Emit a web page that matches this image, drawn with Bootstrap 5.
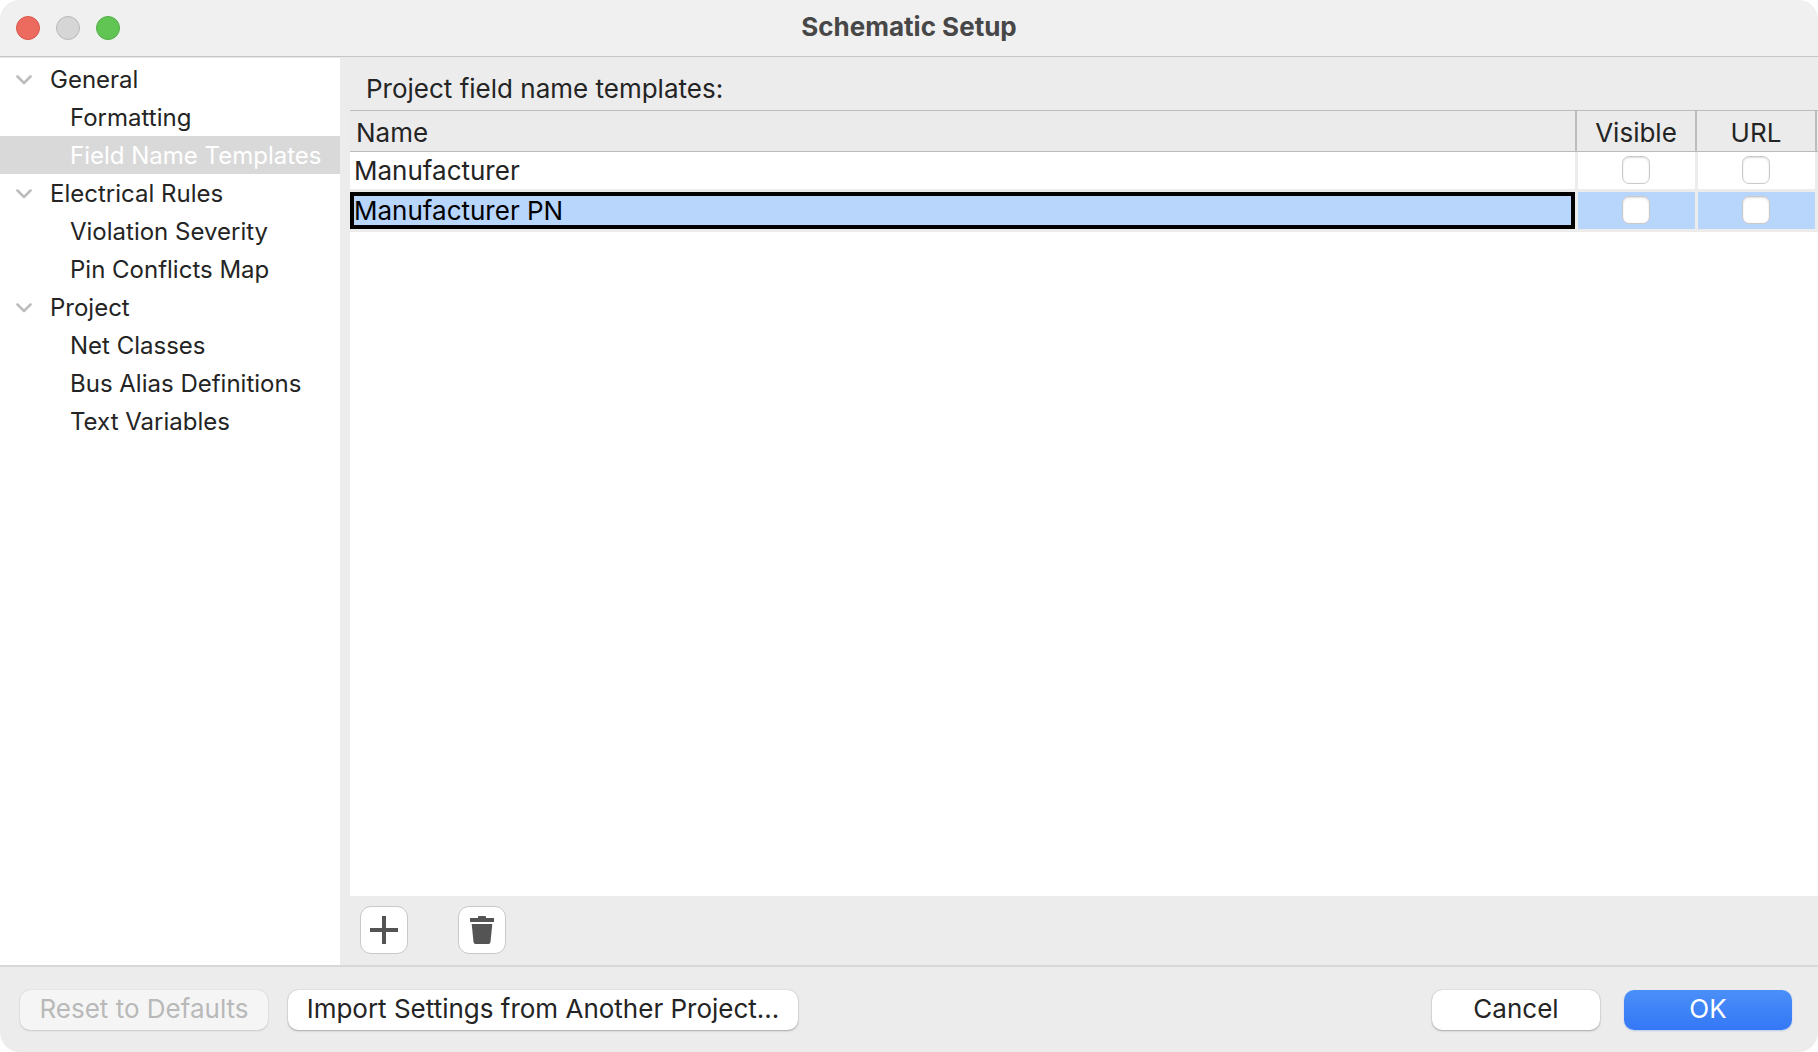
<!DOCTYPE html>
<html lang="en">
<head>
<meta charset="utf-8">
<meta name="viewport" content="width=device-width, initial-scale=1">
<title>Schematic Setup</title>
<link href="https://cdn.jsdelivr.net/npm/bootstrap@5.3.0/dist/css/bootstrap.min.css" rel="stylesheet">
<style>
  body { font-family: Inter, "Liberation Sans", sans-serif; font-size: 26px; line-height: 30px; color: #242424; background: #fff; }
  .window { background: #ececec; border-radius: 20px; }
  .titlebar { height: 57px; background: #f0f0f0; border-bottom: 1px solid #c6c6c6; padding: 0 16px; }
  .titlebar h1 { font-size: 26px; line-height: 30px; font-weight: 700; color: #474747; padding-bottom: 2px; }
  .side-slot { flex: 1 1 0; }
  .light { width: 24px; height: 24px; border-radius: 50%; border: 1px solid; padding: 0; }
  .light-close { background: #ed6a5e; border-color: #d8574c; }
  .light-min { background: #d6d6d6; border-color: #b9b9b9; }
  .light-zoom { background: #61c554; border-color: #50b043; }
  .sidebar { width: 340px; background: #fff; border-top: 1px solid #e4e4e4; padding-top: 2px; font-size: 24px; }
  .tree-item { display: flex; align-items: center; height: 38px; padding-top: 2px; color: #242424; text-decoration: none; white-space: nowrap; }
  .tree-group { padding-left: 16px; gap: 18px; }
  .tree-leaf { padding-left: 70px; }
  .tree-leaf.active { background: #d9d9d9; color: #fff; }
  .pane { padding-left: 10px; min-width: 0; }
  .pane-title { padding: 17px 16px 6px; font-size: 26px; line-height: 30px; margin: 0; }
  .grid { width: 100%; table-layout: fixed; border-collapse: separate; border-spacing: 0; }
  .grid .check-col { width: 120px; }
  .grid th { height: 42px; font-weight: 400; padding: 4px 6px 0; background: #ebebeb; border: solid #bcbcbc; border-width: 1px 0; line-height: 30px; text-align: center; box-shadow: inset -1px 0 #ebebeb, inset -3px 0 #bcbcbc; }
  .grid th:first-child { text-align: left; }
  .grid th + th { padding: 4px 4px 0 0; }
  .grid td { height: 40px; padding: 0 4px; background: #fff; border: solid #ececec; border-width: 0 3px 3px 0; line-height: 30px; text-align: center; }
  .grid td + td { padding: 0 2px 2px 0; }
  .grid td:first-child { text-align: left; }
  .grid tr.picked td { background: #b8d5fc; color: #000; }
  .grid tr.picked td:first-child { box-shadow: inset 0 0 0 4px #000; }
  .tick { appearance: none; display: block; width: 28px; height: 28px; margin: 0 auto; background: #fff; border: 1px solid #c9c9c9; border-radius: 7px; box-shadow: inset 0 1px 2px #ddd; }
  .toolbar { padding: 10px 10px 11px; gap: 50px; }
  .tool { width: 48px; height: 48px; padding: 0; background: #fff; border: 1px solid #c8c8c8; border-radius: 11px; display: flex; align-items: center; justify-content: center; }
  .footer-bar { border-top: 2px solid #d8d8d8; padding: 23px 26px 22px 20px; }
  .push { height: 40px; padding: 0 16px 2px; font-size: 26px; line-height: 38px; border: 0; border-radius: 10px; background: #fff; color: #242424; box-shadow: 0 0 1px #999, 0 1px 2px #aaa; white-space: nowrap; }
  .push:disabled { background: #f5f5f5; color: #b9b9b9; opacity: 1; box-shadow: 0 0 1px #bbb, 0 1px 2px #ccc; }
  .push-reset { width: 248px; margin-right: 20px; }
  .push-import { width: 510px; }
  .push-answer { width: 168px; }
  .push-ok { background: linear-gradient(#4a8ff8, #3478f6); color: #fff; box-shadow: 0 1px 2px #b9c9e8; }
</style>
<script src="https://cdn.jsdelivr.net/npm/bootstrap@5.3.0/dist/js/bootstrap.bundle.min.js"></script>
</head>
<body>
<div class="window d-flex flex-column vh-100 overflow-hidden">
  <header class="titlebar d-flex align-items-center flex-shrink-0">
    <div class="side-slot d-flex gap-3">
      <button type="button" class="light light-close" aria-label="Close"></button>
      <button type="button" class="light light-min" aria-label="Minimize" disabled></button>
      <button type="button" class="light light-zoom" aria-label="Zoom"></button>
    </div>
    <h1 class="m-0">Schematic Setup</h1>
    <div class="side-slot"></div>
  </header>

  <div class="d-flex flex-grow-1 overflow-hidden">
    <nav class="sidebar flex-shrink-0" aria-label="Settings pages">
      <a href="#" class="tree-item tree-group"><svg width="16" height="10" viewBox="0 0 16 10" fill="none" stroke="#bdbdbd" stroke-width="2.6" stroke-linecap="round" stroke-linejoin="round" aria-hidden="true"><path d="M1.5 1.5 8 8l6.500-6.500"/></svg>General</a>
      <a href="#" class="tree-item tree-leaf">Formatting</a>
      <a href="#" class="tree-item tree-leaf active" aria-current="page">Field Name Templates</a>
      <a href="#" class="tree-item tree-group"><svg width="16" height="10" viewBox="0 0 16 10" fill="none" stroke="#bdbdbd" stroke-width="2.6" stroke-linecap="round" stroke-linejoin="round" aria-hidden="true"><path d="M1.5 1.5 8 8l6.500-6.500"/></svg>Electrical Rules</a>
      <a href="#" class="tree-item tree-leaf">Violation Severity</a>
      <a href="#" class="tree-item tree-leaf">Pin Conflicts Map</a>
      <a href="#" class="tree-item tree-group"><svg width="16" height="10" viewBox="0 0 16 10" fill="none" stroke="#bdbdbd" stroke-width="2.6" stroke-linecap="round" stroke-linejoin="round" aria-hidden="true"><path d="M1.5 1.5 8 8l6.500-6.500"/></svg>Project</a>
      <a href="#" class="tree-item tree-leaf">Net Classes</a>
      <a href="#" class="tree-item tree-leaf">Bus Alias Definitions</a>
      <a href="#" class="tree-item tree-leaf">Text Variables</a>
    </nav>

    <main class="pane d-flex flex-column flex-grow-1">
      <h2 class="pane-title fw-normal" id="templates-title">Project field name templates:</h2>
      <div class="bg-white flex-grow-1 overflow-hidden">
        <table class="grid" aria-labelledby="templates-title">
          <colgroup><col><col class="check-col"><col class="check-col"></colgroup>
          <thead><tr><th scope="col">Name</th><th scope="col">Visible</th><th scope="col">URL</th></tr></thead>
          <tbody>
            <tr>
              <td>Manufacturer</td>
              <td><input type="checkbox" class="tick" aria-label="Manufacturer visible"></td>
              <td><input type="checkbox" class="tick" aria-label="Manufacturer URL"></td>
            </tr>
            <tr class="picked">
              <td>Manufacturer PN</td>
              <td><input type="checkbox" class="tick" aria-label="Manufacturer PN visible"></td>
              <td><input type="checkbox" class="tick" aria-label="Manufacturer PN URL"></td>
            </tr>
          </tbody>
        </table>
      </div>
      <div class="toolbar d-flex">
        <button type="button" class="tool" aria-label="Add field"><svg width="28" height="28" viewBox="0 0 28 28" stroke="#545454" stroke-width="4" aria-hidden="true"><path d="M14 0v28M0 14h28"/></svg></button>
        <button type="button" class="tool" aria-label="Delete field"><svg width="24" height="28" viewBox="0 0 24 28" fill="#545454" aria-hidden="true"><path d="M8 2V1Q8 0 9 0h6q1 0 1 1v1h8v4H0V2zM1.700 8h20.600L20.500 26q-.2 2-2 2h-13q-1.800 0-2-2z"/></svg></button>
      </div>
    </main>
  </div>

  <footer class="footer-bar d-flex flex-shrink-0">
    <button type="button" class="push push-reset" disabled>Reset to Defaults</button>
    <button type="button" class="push push-import me-auto">Import Settings from Another Project...</button>
    <button type="button" class="push push-answer me-4">Cancel</button>
    <button type="button" class="push push-answer push-ok">OK</button>
  </footer>
</div>
</body>
</html>
